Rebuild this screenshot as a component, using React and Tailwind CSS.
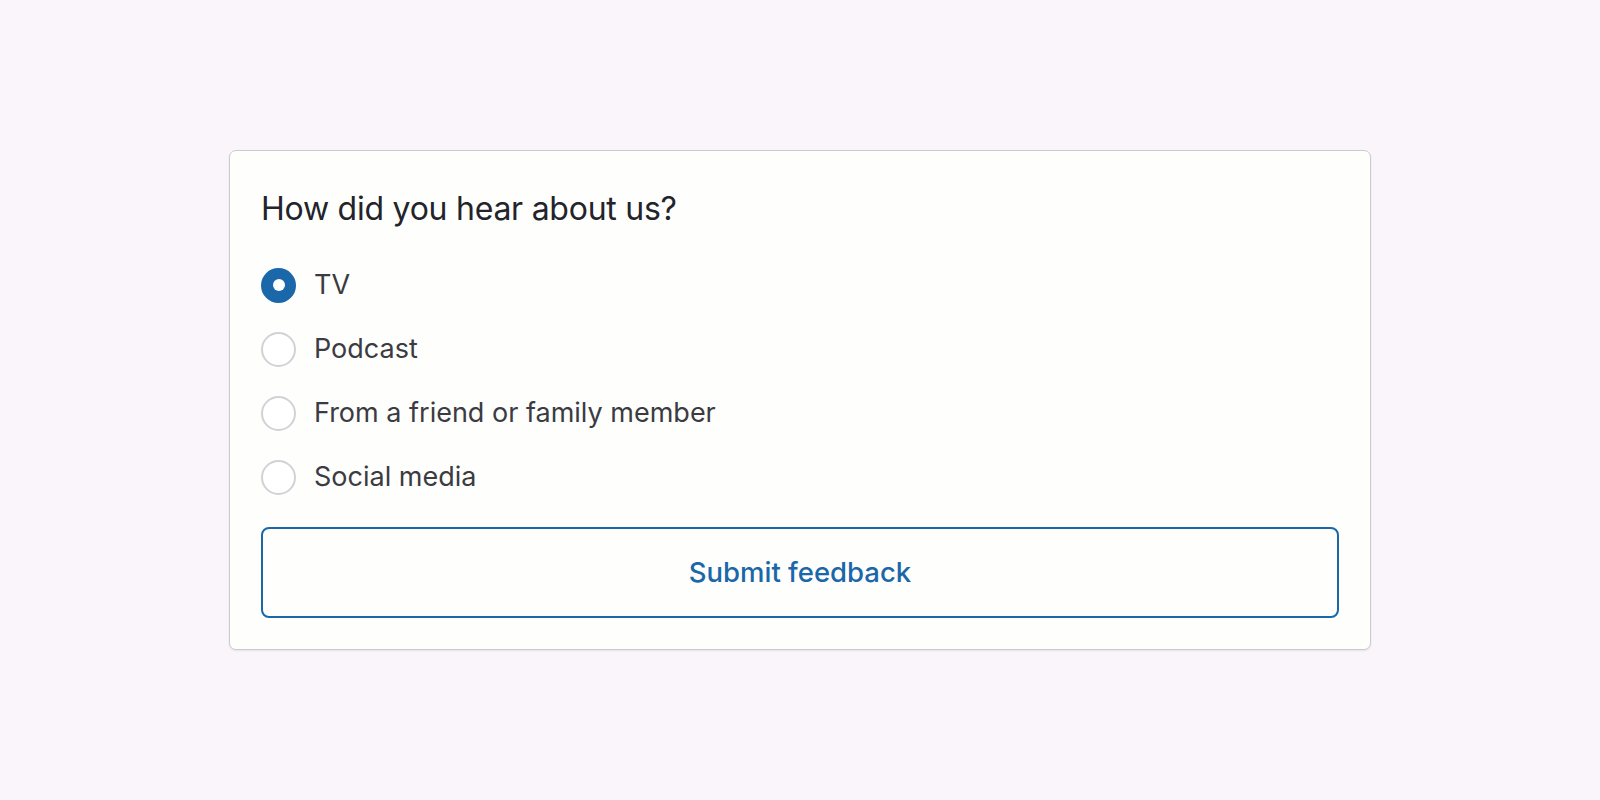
import React, { useState } from "react";

const OPTIONS = ["TV", "Podcast", "From a friend or family member", "Social media"];

function Radio({ checked }) {
  return checked ? (
    <span className="flex h-[35px] w-[35px] shrink-0 items-center justify-center rounded-full bg-[#1a67a9]">
      <span className="h-[12px] w-[12px] rounded-full bg-white" />
    </span>
  ) : (
    <span className="h-[35px] w-[35px] shrink-0 rounded-full border-2 border-[#d2d2d6] bg-white" />
  );
}

export default function App() {
  const [value, setValue] = useState("TV");
  return (
    <div
      className="flex min-h-screen items-center justify-center bg-[#f9f5fb]"
      style={{ fontFamily: "Inter, 'Noto Sans', sans-serif" }}
    >
      <form
        className="flex w-[1142px] flex-col rounded-[7px] border border-[#cccccc] bg-[#fefefc] px-[31px] pt-[32px] pb-[31px] shadow-[0_1px_2px_rgba(0,0,0,0.08)]"
        onSubmit={(e) => e.preventDefault()}
      >
        <h2 className="text-[32px] leading-[52px] font-normal text-[#23232b] tracking-[-0.25px]">
          How did you hear about us?
        </h2>
        <div className="mt-[32px] flex flex-col gap-[28px]">
          {OPTIONS.map((opt) => (
            <label
              key={opt}
              className="flex h-[36px] cursor-pointer items-center gap-[18px]"
              onClick={() => setValue(opt)}
            >
              <Radio checked={value === opt} />
              <span className="text-[27px] text-[#3b3b42]">{opt}</span>
            </label>
          ))}
        </div>
        <button
          type="submit"
          className="mt-[32px] flex h-[91px] w-full items-center justify-center rounded-[8px] border-2 border-[#1a67a9] bg-transparent text-[27.5px] font-medium text-[#1a67a9]"
        >
          Submit feedback
        </button>
      </form>
    </div>
  );
}
